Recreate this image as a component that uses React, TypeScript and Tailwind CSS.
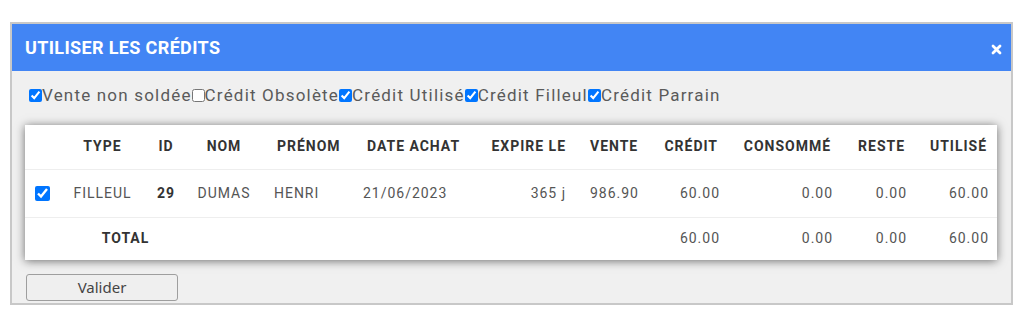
import { useState } from 'react'

const filters = [
  { label: 'Vente non soldée', checked: true },
  { label: 'Crédit Obsolète', checked: false },
  { label: 'Crédit Utilisé', checked: true },
  { label: 'Crédit Filleul', checked: true },
  { label: 'Crédit Parrain', checked: true },
]

export default function App() {
  const [checks, setChecks] = useState(filters.map(f => f.checked))
  const [rowOn, setRowOn]   = useState(true)

  return (
    <div className="w-[1024px] h-[321px] bg-white pt-[22px] pl-[10px] font-['Roboto',sans-serif]">
      <div className="w-[1003px] h-[283px] border-2 border-[#c8c8c8] bg-[#f0f0f0] flex flex-col">
        {/* Header */}
        <div className="h-[47px] bg-[#4285f4] flex items-center justify-between pl-[13px] pr-[9px]">
          <h2 className="text-white text-[18px] font-bold tracking-[0.02em]">UTILISER LES CRÉDITS</h2>
          <button className="text-white mt-[4px]" aria-label="Fermer">
            <svg width="11" height="11" viewBox="0 0 11 11" fill="none" stroke="currentColor" strokeWidth={2.8} strokeLinecap="round">
              <path d="M2 2l7 7M9 2l-7 7" />
            </svg>
          </button>
        </div>

        {/* Filters */}
        <div className="h-[50px] flex items-center pl-[17px] pb-[1px] text-[17px] text-[#5a5a5a] tracking-[0.07em]">
          {filters.map((f, i) => (
            <label key={f.label} className="flex items-center">
              <input
                type="checkbox"
                checked={checks[i]}
                onChange={() => setChecks(c => c.map((v, j) => (j === i ? !v : v)))}
                className="m-0 w-[13px] h-[13px]"
              />
              <span>{f.label}</span>
            </label>
          ))}
        </div>

        {/* Table card */}
        <div className="ml-[13px] mt-[4px] w-[972px] bg-white shadow-[0_1px_9px_rgba(0,0,0,0.55)]">
          <table className="w-full border-collapse text-[14px] tracking-[0.07em] text-[#555]">
            <thead>
              <tr className="h-[44px] border-b border-[#eeeeee] text-[#333] font-bold">
                <th className="w-[35px]" />
                <th className="w-[85px] text-center font-bold">TYPE</th>
                <th className="w-[42px] text-center font-bold">ID</th>
                <th className="w-[74px] text-center font-bold">NOM</th>
                <th className="w-[91px] text-left pl-[16px] font-bold">PRÉNOM</th>
                <th className="w-[123px] text-left pl-[15px] font-bold">DATE ACHAT</th>
                <th className="w-[103px] text-right pr-[12px] font-bold">EXPIRE LE</th>
                <th className="w-[72px] text-left pl-[12px] font-bold">VENTE</th>
                <th className="w-[80px] text-right pr-[12px] font-bold">CRÉDIT</th>
                <th className="w-[113px] text-right pr-[12px] font-bold">CONSOMMÉ</th>
                <th className="w-[74px] text-right pr-[12px] font-bold">RESTE</th>
                <th className="text-right pr-[10px] font-bold">UTILISÉ</th>
              </tr>
            </thead>
            <tbody>
              <tr className="h-[48px] border-b border-[#eeeeee]">
                <td className="pl-[10px]">
                  <input type="checkbox" checked={rowOn} onChange={() => setRowOn(v => !v)} className="m-0 w-[15px] h-[15px] align-middle" />
                </td>
                <td className="text-center">FILLEUL</td>
                <td className="text-center font-bold text-[#333]">29</td>
                <td className="text-center">DUMAS</td>
                <td className="text-left pl-[13px]">HENRI</td>
                <td className="text-left pl-[11px]">21/06/2023</td>
                <td className="text-right pr-[12px]">365 j</td>
                <td className="text-left pl-[12px]">986.90</td>
                <td className="text-right pr-[10px]">60.00</td>
                <td className="text-right pr-[10px]">0.00</td>
                <td className="text-right pr-[10px]">0.00</td>
                <td className="text-right pr-[8px]">60.00</td>
              </tr>
              <tr className="h-[43px]">
                <td />
                <td colSpan={2} className="text-center font-bold text-[#333] pl-[4px]">TOTAL</td>
                <td colSpan={5} />
                <td className="text-right pr-[10px]">60.00</td>
                <td className="text-right pr-[10px]">0.00</td>
                <td className="text-right pr-[10px]">0.00</td>
                <td className="text-right pr-[8px]">60.00</td>
              </tr>
            </tbody>
          </table>
        </div>

        {/* Footer */}
        <div className="pl-[14px] mt-[14px]">
          <button className="w-[152px] h-[27px] border border-[#9e9e9e] rounded-[3px] bg-[#efefef] text-[15px] text-[#444] font-['Noto_Sans',sans-serif] leading-none">
            Valider
          </button>
        </div>
      </div>
    </div>
  )
}
